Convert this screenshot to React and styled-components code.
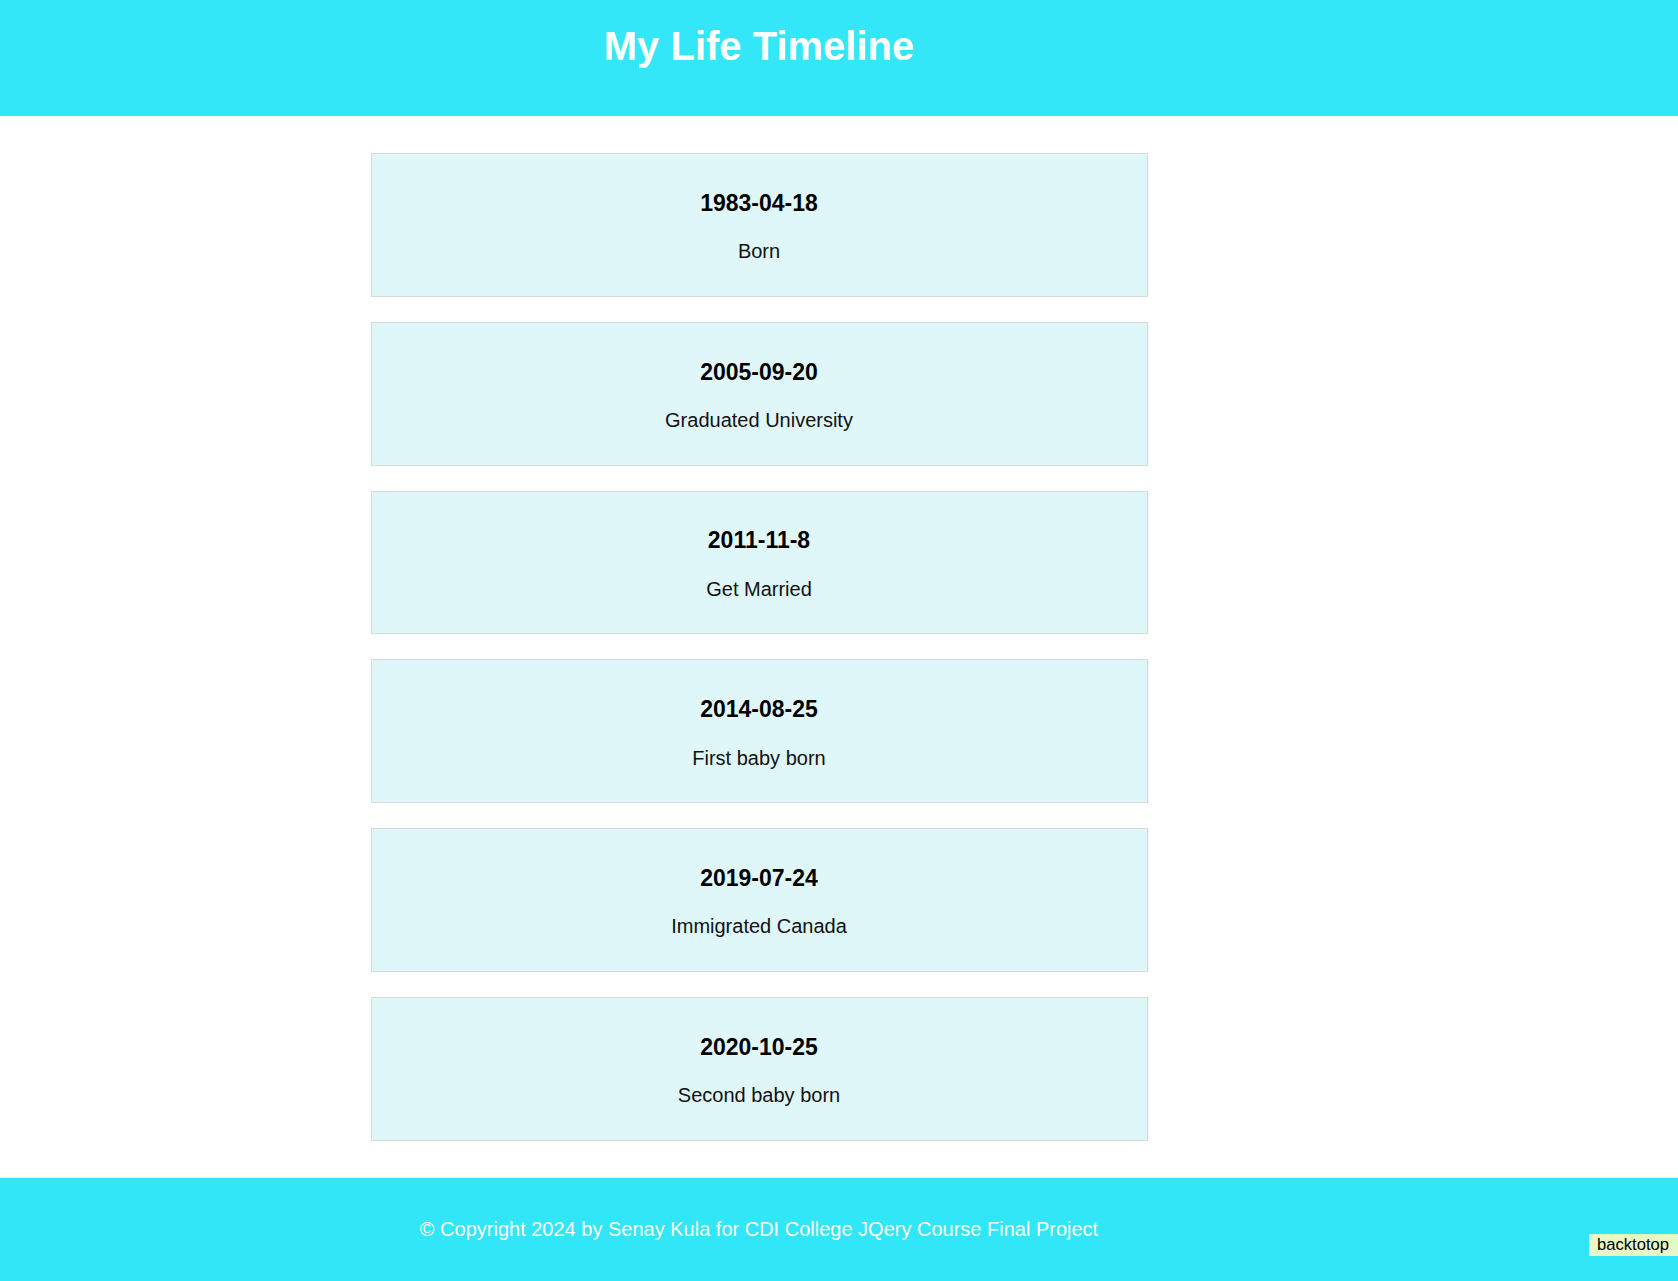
import React from 'react';
import styled, { createGlobalStyle } from 'styled-components';

const GlobalStyle = createGlobalStyle`
  html, body {
    margin: 0;
    padding: 0;
    background: #ffffff;
    font-family: "Liberation Sans", Arial, sans-serif;
  }
`;

const Header = styled.header`
  background: #33e7f8;
  height: 116px;
  box-sizing: border-box;
  padding: 23px 160px 0 0;

  h1 {
    margin: 0;
    text-align: center;
    color: #ffffff;
    font-size: 40px;
    font-weight: 700;
    line-height: 46px;
  }
`;

const Main = styled.main`
  padding: 37px 160px 12px 0;
`;

const Timeline = styled.div`
  width: 777px;
  margin: 0 auto;
`;

const Event = styled.div`
  background: #e0f7fa;
  border: 1px solid #d6dadb;
  padding: 12.5px 0;
  margin-bottom: 25px;
  text-align: center;

  h3 {
    margin: 23.4px 0;
    font-size: 23px;
    font-weight: 700;
    color: #000000;
  }

  p {
    margin: 0 0 20px;
    font-size: 20px;
    line-height: 23px;
    color: #111111;
  }
`;

const Footer = styled.footer`
  background: #30e6f7;
  padding: 40px 160px 40px 0;
  text-align: center;

  p {
    margin: 0;
    color: #ffffff;
    font-size: 20px;
    line-height: 23px;
  }
`;

const BackToTop = styled.button`
  position: fixed;
  right: 0;
  bottom: 25px;
  height: 22px;
  padding: 0 9px 0 8px;
  border: none;
  background: #e6f8c7;
  color: #000000;
  font-family: "Liberation Sans", Arial, sans-serif;
  font-size: 16.6px;
  line-height: 22px;
  cursor: pointer;
`;

const events = [
  { date: '1983-04-18', text: 'Born' },
  { date: '2005-09-20', text: 'Graduated University' },
  { date: '2011-11-8', text: 'Get Married' },
  { date: '2014-08-25', text: 'First baby born' },
  { date: '2019-07-24', text: 'Immigrated Canada' },
  { date: '2020-10-25', text: 'Second baby born' },
];

const App = () => {
  return (
    <>
      <GlobalStyle />
      <Header>
        <h1>My Life Timeline</h1>
      </Header>
      <Main>
        <Timeline>
          {events.map(ev => (
            <Event key={ev.date}>
              <h3>{ev.date}</h3>
              <p>{ev.text}</p>
            </Event>
          ))}
        </Timeline>
      </Main>
      <Footer>
        <p>© Copyright 2024 by Senay Kula for CDI College JQery Course Final Project</p>
      </Footer>
      <BackToTop onClick={() => window.scrollTo(0, 0)}>backtotop</BackToTop>
    </>
  );
};

export default App;
